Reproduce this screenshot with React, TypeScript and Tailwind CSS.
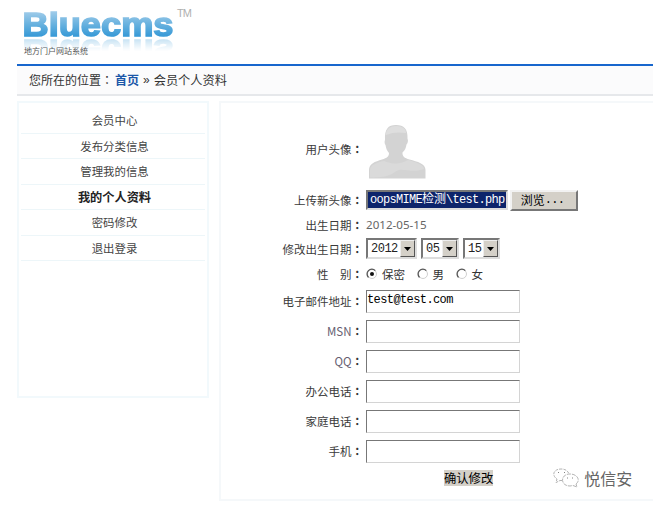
import type { ReactNode } from 'react';

const menu = ['会员中心', '发布分类信息', '管理我的信息', '我的个人资料', '密码修改', '退出登录'];

function Logo() {
  return (
    <div className="flex h-full flex-col">
      <div className="flex h-[38px]">
        <svg
          width="159"
          height="38"
          viewBox="0 0 159 38"
          className="block shrink-0 [-webkit-box-reflect:below_0px_linear-gradient(transparent_65%,rgba(0,0,0,0.3))]"
        >
          <defs>
            <linearGradient id="blue" x1="0" y1="11" x2="0" y2="37" gradientUnits="userSpaceOnUse">
              <stop offset="0" stopColor="#a3cdea" />
              <stop offset="0.5" stopColor="#69b2df" />
              <stop offset="1" stopColor="#3498d6" />
            </linearGradient>
          </defs>
          <text
            x="5.500"
            y="35.500"
            textLength="151"
            lengthAdjust="spacingAndGlyphs"
            fill="url(#blue)"
            stroke="url(#blue)"
            strokeWidth="1.500"
            className="font-['Liberation_Sans',sans-serif] text-[33px] font-bold"
          >
            Bluecms
          </text>
        </svg>
        <span className="ml-[1px] mt-[7px] font-['Liberation_Sans',sans-serif] text-[11px] leading-[13px] tracking-[-1px] text-[#b0b0b0]">TM</span>
      </div>
      <span className="mt-[7px] whitespace-nowrap pl-[7px] text-[8px] leading-[12px] text-[#555]">地方门户网站系统</span>
    </div>
  );
}

function Avatar() {
  return (
    <svg width="60" height="56" viewBox="0 0 60 56" className="ml-[2px] mt-[6px] block">
      <path d="M1 54.500V46c0-6 6-8.500 13-10.500 5-1.500 7-3 7-6.500-2-2-3-5-3.500-8-1-1-1.200-4-.5-5C16.500 5 20 1 28 1c8 0 12 4 11.500 13.500 1 2 .2 5-1 6-.5 3-1.500 6-4 8-.3 4 2 5.500 7 7 8 2 16 4.500 16 10.500v8.500z" fill="#d3d3d3" />
      <path d="M18 9c1-4 4-7 10-7 7 0 10 3 10 7-7-1-13-1-20 2z" fill="#dedede" />
      <path d="M2 53.500V46c0-5 7-7.500 14-9 11 4 17 3 24-1 8 2 16 5 16 9-13 5-22-3-29 3-7 5-15 5.500-25 5.500z" fill="#dadada" />
    </svg>
  );
}

function Row({ label, h, children, latin = false }: { label: string; h: string; children: ReactNode; latin?: boolean }) {
  return (
    <div className={`flex items-center ${h}`}>
      <div className={`mr-[3px] flex w-[142px] items-center justify-end whitespace-pre text-[11.5px] leading-4 ${latin ? 'text-[#665e70]' : 'text-[#3a3a3a]'}`}>
        <span>{label}</span>
        <span className="font-['Noto_Sans_CJK_TC',sans-serif] font-bold text-[#333]">：</span>
      </div>
      {children}
    </div>
  );
}

function Field({ value = '' }: { value?: string }) {
  return (
    <input
      defaultValue={value}
      className="mt-px h-[23px] w-[154px] border border-b-[#d4d4d4] border-l-[#777] border-r-[#d4d4d4] border-t-[#777] bg-white pb-[3px] font-['Liberation_Mono',monospace] text-[12px] tracking-[-0.6px] text-black outline-none"
    />
  );
}

function Select({ value, w }: { value: string; w: string }) {
  return (
    <div className={`flex h-[21px] items-center justify-between border-2 border-b-[#ddd] border-l-[#777] border-r-[#ddd] border-t-[#777] bg-white pl-[3px] ${w}`}>
      <span className="font-['Liberation_Mono',monospace] text-[12px] leading-4 tracking-[-0.5px] text-[#222]">{value}</span>
      <span className="flex h-[17px] w-[15px] items-center justify-center border border-b-[#555] border-l-[#eee] border-r-[#555] border-t-[#eee] bg-[#d4d0c8]">
        <svg width="7" height="4" viewBox="0 0 7 4"><path d="M0 0h7L3.500 4z" fill="#000" /></svg>
      </span>
    </div>
  );
}

function Radio({ label, checked = false }: { label: string; checked?: boolean }) {
  return (
    <label className="flex items-center text-[11.5px] leading-4 text-[#333]">
      <svg width="12" height="12" viewBox="0 0 12 12" className="mr-[4px] mt-px">
        <circle cx="6" cy="6" r="4.500" fill="#fff" stroke="#d0d0d0" />
        <path d="M2.500 9.500A4.700 4.700 0 0 1 9.300 2.600" fill="none" stroke="#555" strokeWidth="1.300" />
        {checked && <circle cx="6" cy="6" r="2" fill="#111" />}
      </svg>
      {label}
    </label>
  );
}

export default function App() {
  return (
    <div className="h-[507px] w-[653px] overflow-hidden bg-white pl-[17px] font-['Noto_Sans_CJK_SC',sans-serif]">
      <header className="h-[64px]"><Logo /></header>
      <nav className="flex h-[32px] items-center border-b-2 border-t-2 border-b-[#e6e8eb] border-t-[#1766cd] bg-[#fbfbfc] pb-px pl-[12px] text-[12px] leading-5 text-[#333]">
        <span>您所在的位置</span>
        <span className="font-['Noto_Sans_CJK_TC',sans-serif]">：</span>
        <a className="ml-[2px] font-bold text-[#1c57a8]">首页</a>
        <span className="mx-[4px] font-['Liberation_Sans',sans-serif]">»</span>
        <span className="text-[12.2px]">会员个人资料</span>
      </nav>
      <div className="flex items-start pt-[5px]">
        <aside className="mr-[10px] h-[297px] w-[192px] border-2 border-[#f2f9fc] px-[2px] pt-[5px]">
          {menu.map((item) => (
            <div
              key={item}
              className={`flex h-[25.5px] items-center justify-center border-b border-[#edf6f9] pl-[3px] leading-5 ${item === '我的个人资料' ? 'text-[12.2px] font-bold text-[#222]' : 'text-[11.4px] text-[#444]'}`}
            >
              {item}
            </div>
          ))}
        </aside>
        <main className="h-[400px] w-[434px] shrink-0 border-2 border-r-0 border-[#f5f8fa]">
          <div className="h-[17px]" />
          <Row label="用户头像" h="h-[58px] mb-[9px]"><Avatar /></Row>
          <Row label="上传新头像" h="h-[26px]">
            <div className="flex h-[20px] w-[142px] items-center overflow-hidden border-2 border-b-[#ddd] border-l-[#777] border-r-[#ddd] border-t-[#777] bg-[#0d246b] pl-[2px]">
              <span className="whitespace-nowrap font-['Liberation_Mono','Noto_Sans_CJK_SC',monospace] text-[12px] leading-4 tracking-[-0.7px] text-white">
                oopsMIME<span className="text-[12px] tracking-normal">检测</span>\test.php
              </span>
            </div>
            <button className="ml-[2px] flex h-[21px] w-[68px] items-center justify-center border-2 border-b-[#777] border-l-[#f2f2f2] border-r-[#777] border-t-[#f2f2f2] bg-[#d4d0c8] pr-[3px] text-[12px] leading-4 text-black">
              浏览<span className="font-['Liberation_Mono',monospace] tracking-[-0.7px]">...</span>
            </button>
          </Row>
          <Row label="出生日期" h="h-[23px]">
            <span className="font-['Noto_Sans',sans-serif] text-[11.6px] leading-4 text-[#666]">2012-05-15</span>
          </Row>
          <Row label="修改出生日期" h="h-[25px]">
            <Select value="2012" w="w-[51px]" />
            <span className="w-[4px]" />
            <Select value="05" w="w-[38px]" />
            <span className="w-[4px]" />
            <Select value="15" w="w-[37px]" />
          </Row>
          <Row label={'性　别'} h="h-[25px]">
            <div className="flex gap-[11.5px]">
              <Radio label="保密" checked />
              <Radio label="男" />
              <Radio label="女" />
            </div>
          </Row>
          <Row label="电子邮件地址" h="h-[30px]"><Field value="test@test.com" /></Row>
          <Row label="MSN" h="h-[30px]" latin><Field /></Row>
          <Row label="QQ" h="h-[30px]" latin><Field /></Row>
          <Row label="办公电话" h="h-[30px]"><Field /></Row>
          <Row label="家庭电话" h="h-[30px]"><Field /></Row>
          <Row label="手机" h="h-[30px]"><Field /></Row>
          <div className="flex items-start pl-[223px] pt-[4px]">
            <button className="h-[16px] bg-[#d4d0c8] text-[12.3px] leading-[15px] text-black">确认修改</button>
            <div className="ml-[59px] mt-[-4px] flex items-center text-[16px] leading-6 text-[#666]">
              <svg width="27" height="22" viewBox="0 0 27 22" className="mr-[5px]" fill="none" stroke="#aaa" strokeWidth="0.900">
                <path d="M10 13.500H8l-4 2 1-3.500C-1 8 2 2 9 2c4.500 0 7 2 8 5" strokeDasharray="3 1" />
                <path d="M24 17c5-4 1-10-6-10-10 0-10 12 0 12l3-.5 4 1.500z" strokeDasharray="4 1" />
                <path d="M6 5.500h1M12 5.500h1M15 11h1M20 11h1" stroke="#777" />
              </svg>
              悦信安
            </div>
          </div>
        </main>
      </div>
    </div>
  );
}
